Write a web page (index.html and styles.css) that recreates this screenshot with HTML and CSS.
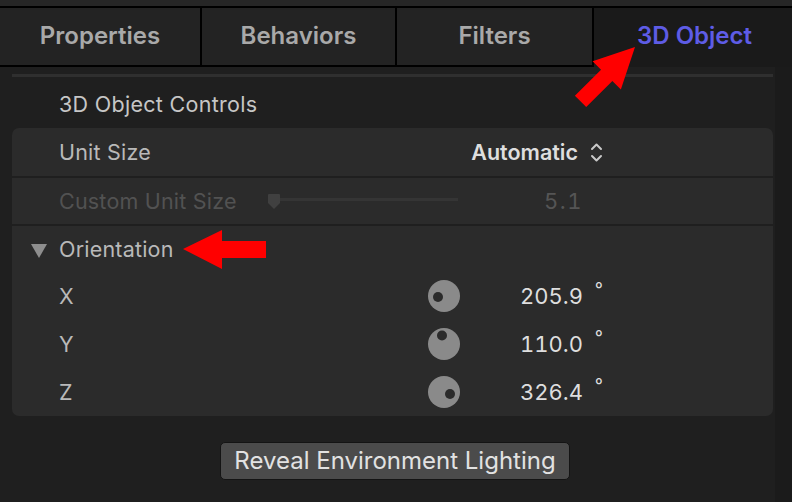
FILE: index.html
```html
<!DOCTYPE html>
<html>
<head>
<meta charset="utf-8">
<link rel="stylesheet" href="styles.css">
</head>
<body>
<div class="app">
  <div class="topstrip"></div>
  <div class="tabs">
    <div class="tab t1">Properties</div>
    <div class="tab t2">Behaviors</div>
    <div class="tab t3">Filters</div>
    <div class="tab t4 active">3D Object</div>
  </div>
  <div class="content">
    <div class="main">
      <div class="rule"></div>
      <div class="header">3D Object Controls</div>
      <div class="panel">
        <div class="row">
          <div class="label">Unit Size</div>
          <div class="control"></div>
          <div class="value strong pad">Automatic</div>
          <div class="unit">
            <svg class="stepper" width="13" height="21" viewBox="0 0 13 21"><path d="M2 7 L6.5 2.5 L11 7 M2 14 L6.5 18.5 L11 14" fill="none" stroke="#c9c9c9" stroke-width="2" stroke-linecap="round" stroke-linejoin="round"/></svg>
          </div>
        </div>
        <div class="row sep">
          <div class="label disabled">Custom Unit Size</div>
          <div class="control">
            <div class="slider">
              <svg class="thumb" width="12" height="15" viewBox="0 0 12 15"><path d="M1 0 H11 Q12 0 12 1 V9 L6 15 L0 9 V1 Q0 0 1 0 Z" fill="#404040"/></svg>
              <div class="track"></div>
            </div>
          </div>
          <div class="value num dim">5.1</div>
          <div class="unit"></div>
        </div>
        <div class="row sep">
          <div class="label disc">
            <svg class="tri" width="16" height="14" viewBox="0 0 16 14"><path d="M0 0 H16 L8 14 Z" fill="#8e8e8e"/></svg>
            Orientation
          </div>
          <div class="control"></div>
          <div class="value"></div>
          <div class="unit"></div>
        </div>
        <div class="row">
          <div class="label">X</div>
          <div class="control">
            <svg class="dial" width="32" height="32" viewBox="0 0 32 32"><circle cx="16" cy="16" r="16" fill="#8a8a8a"/><circle cx="10" cy="17" r="5" fill="#2b2b2b"/></svg>
          </div>
          <div class="value num">205.9</div>
          <div class="unit deg">°</div>
        </div>
        <div class="row">
          <div class="label">Y</div>
          <div class="control">
            <svg class="dial" width="32" height="32" viewBox="0 0 32 32"><circle cx="16" cy="16" r="16" fill="#8a8a8a"/><circle cx="14" cy="7.5" r="5" fill="#2b2b2b"/></svg>
          </div>
          <div class="value num">110.0</div>
          <div class="unit deg">°</div>
        </div>
        <div class="row">
          <div class="label">Z</div>
          <div class="control">
            <svg class="dial" width="32" height="32" viewBox="0 0 32 32"><circle cx="16" cy="16" r="16" fill="#8a8a8a"/><circle cx="22" cy="18" r="5" fill="#2b2b2b"/></svg>
          </div>
          <div class="value num">326.4</div>
          <div class="unit deg">°</div>
        </div>
      </div>
      <div class="actions">
        <button class="btn">Reveal Environment Lighting</button>
      </div>
    </div>
    <div class="gutter"></div>
  </div>
  <svg class="annot" width="792" height="502" viewBox="0 0 792 502">
    <polygon transform="translate(635,47) rotate(-45)" points="0,0 -40,-20 -40,-8 -77,-8 -77,8 -40,8 -40,20" fill="#ff0000"/>
    <polygon points="183,249 222,230 222,241 266,241 266,258 222,258 222,269" fill="#ff0000"/>
  </svg>
</div>
</body>
</html>
```

FILE: styles.css
```css
* { box-sizing: border-box; }
html, body { margin: 0; padding: 0; }
body {
  width: 792px;
  height: 502px;
  overflow: hidden;
  background: #1f1f1f;
  font-family: "Inter", "Liberation Sans", sans-serif;
}
.app { position: relative; width: 792px; height: 502px; }
.topstrip {
  height: 8px;
  background: #262626;
  border-bottom: 2px solid #000;
}
.tabs { display: flex; height: 59px; }
.tab {
  display: flex;
  align-items: center;
  justify-content: center;
  background: #232323;
  border-bottom: 2px solid #000;
  color: #a9a9a9;
  font-size: 24px;
  font-weight: 600;
  padding-bottom: 2px;
}
.t1 { width: 200px; }
.t2 { width: 195px; border-left: 2px solid #000; }
.t3 { width: 197px; border-left: 2px solid #000; }
.t4 { width: 200px; border-left: 2px solid #000; padding-left: 3px; }
.tab.active {
  background: #1a1a1a;
  border-bottom: none;
  color: #5e5ce6;
  padding-bottom: 4px;
}
.content { display: flex; height: 435px; }
.main { width: 775px; padding-left: 12px; }
.gutter { flex: 1; background: #1b1b1b; }
.rule {
  margin-top: 7px;
  width: 761px;
  height: 3px;
  background: #2f2f2f;
}
.header {
  height: 51px;
  display: flex;
  align-items: center;
  padding-left: 47px;
  padding-top: 2px;
  color: #c6c6c6;
  font-size: 21.5px;
  letter-spacing: 0.3px;
}
.panel {
  width: 761px;
  background: #2b2b2b;
  border-radius: 7px;
  overflow: hidden;
}
.row {
  height: 48px;
  display: grid;
  grid-template-columns: 47px 209px 192px 123px 20px 1fr;
  align-items: center;
  font-size: 21.5px;
}
.row.sep { border-top: 2px solid #1f1f1f; }
.row > .label { grid-column: 2; color: #b9b9b9; display: flex; align-items: center; white-space: nowrap; letter-spacing: 0.2px; }
.row > .control { grid-column: 3; display: flex; justify-content: flex-end; align-items: center; }
.row > .value { grid-column: 4; text-align: right; color: #dedede; }
.row > .unit { grid-column: 5; display: flex; justify-content: flex-end; align-items: center; color: #dedede; }
.label.disabled { color: #525252; }
.label.disc { position: relative; }
.tri { position: absolute; left: -28px; top: 8px; }
.value.strong { font-weight: 600; }
.value.pad { padding-right: 5px; }
.value.num { font-variant-numeric: tabular-nums; letter-spacing: 0; font-size: 22px; }
.value.dim { color: #555; letter-spacing: 1.5px; }
.deg { font-size: 18px; align-self: start; padding-top: 7px; }
.slider { display: flex; align-items: center; width: 190px; margin-right: 2px; }
.thumb { flex: none; }
.track { flex: 1; height: 3px; background: #353535; margin-top: -3px; }
.actions { padding-left: 208px; padding-top: 26px; }
.btn {
  width: 350px;
  height: 38px;
  background: #4b4b4b;
  border: 1px solid #141414;
  border-radius: 5px;
  color: #e2e2e2;
  font-family: "Inter", "Liberation Sans", sans-serif;
  font-size: 24px;
  padding: 0 0 2px;
}
.annot { position: absolute; left: 0; top: 0; pointer-events: none; }
```
